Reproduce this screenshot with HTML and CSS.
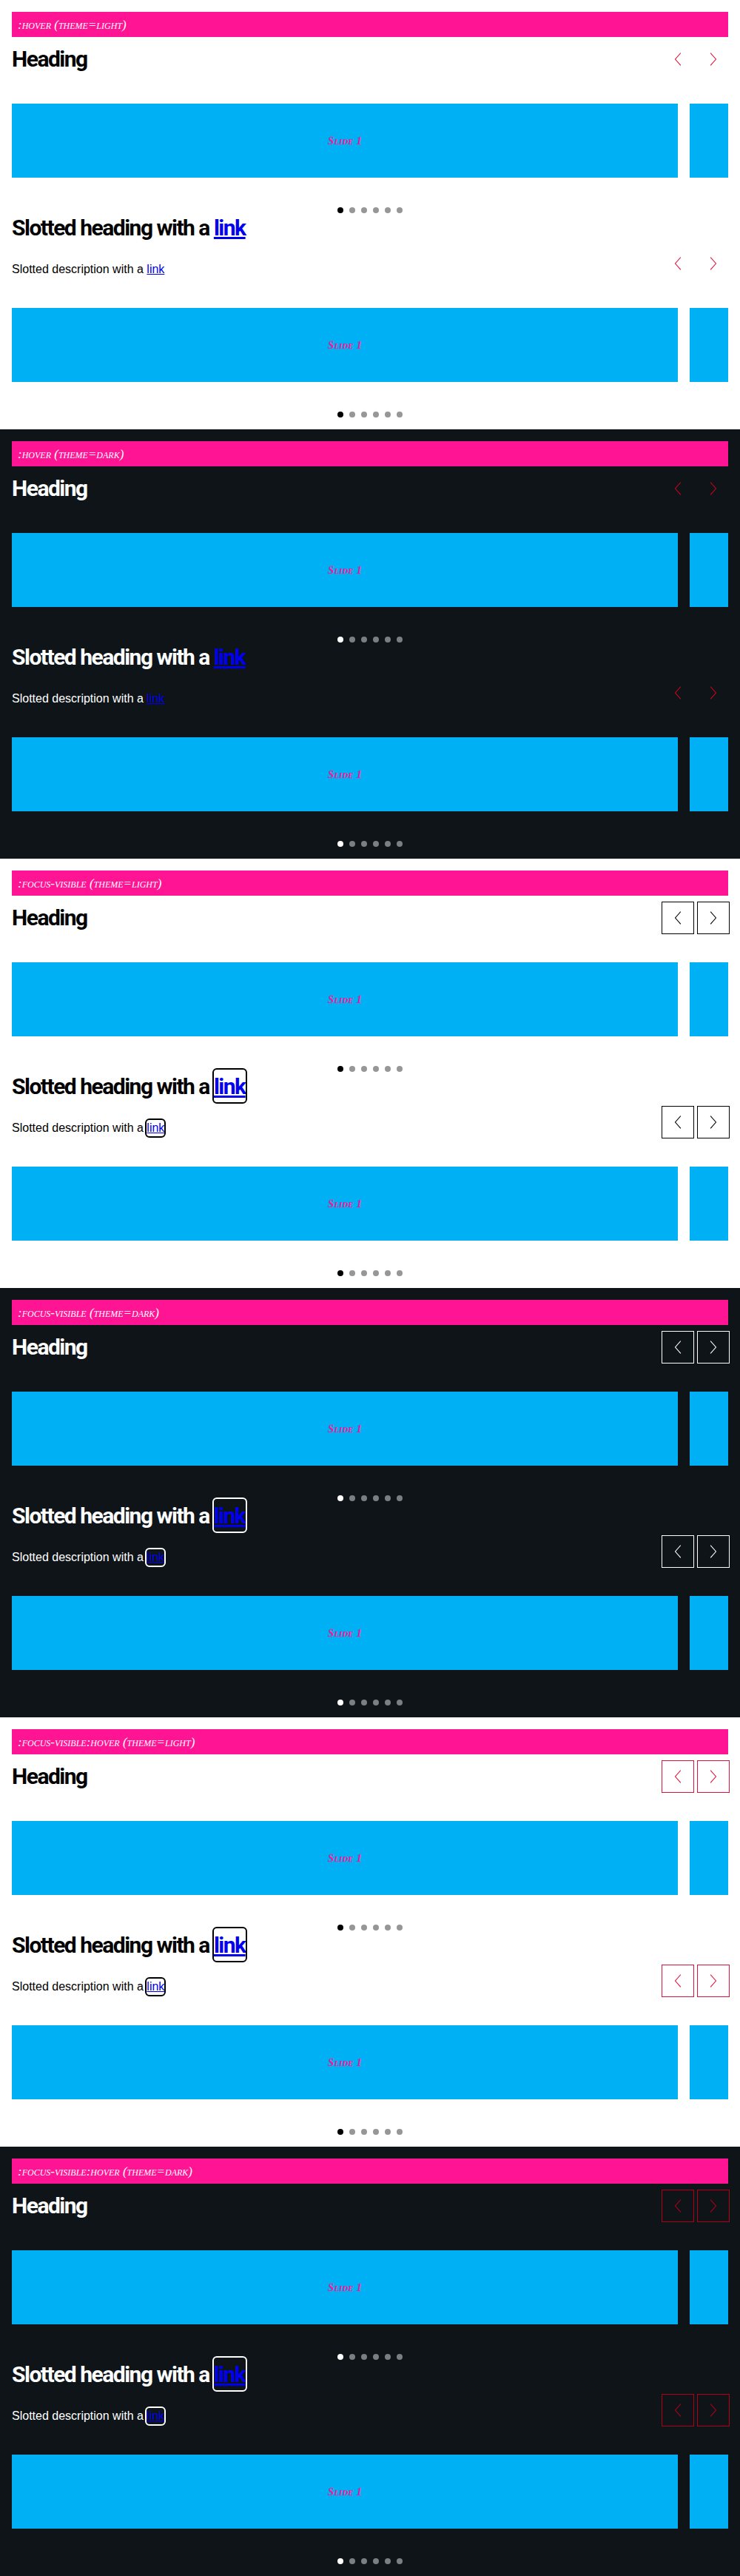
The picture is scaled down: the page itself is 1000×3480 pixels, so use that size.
FILE: index.html
```html
<!DOCTYPE html>
<html lang="en">
<head>
<meta charset="utf-8">
<title>Carousel states</title>
<link rel="stylesheet" href="styles.css">
</head>
<body>

<section class="state light hover">
  <div class="label">:hover (theme=light)</div>
  <div class="carousel">
    <div class="c-head">
      <div class="c-text"><h2 class="c-heading">Heading</h2></div>
      <div class="c-nav">
        <button class="nav-btn" type="button"><svg viewBox="0 0 24 24" width="24" height="24"><path d="M15.5 4 L8.5 12 L15.5 20"/></svg></button>
        <button class="nav-btn" type="button"><svg viewBox="0 0 24 24" width="24" height="24"><path d="M8.5 4 L15.5 12 L8.5 20"/></svg></button>
      </div>
    </div>
    <div class="track"><div class="slide">Slide 1</div><div class="slide"></div></div>
    <div class="dots"><span class="dot on"></span><span class="dot"></span><span class="dot"></span><span class="dot"></span><span class="dot"></span><span class="dot"></span></div>
  </div>
  <div class="carousel">
    <div class="c-head">
      <div class="c-text">
        <h2 class="c-heading">Slotted heading with a <a href="#" class="h-link">link</a></h2>
        <p class="c-desc">Slotted description with a <a href="#" class="d-link">link</a></p>
      </div>
      <div class="c-nav">
        <button class="nav-btn" type="button"><svg viewBox="0 0 24 24" width="24" height="24"><path d="M15.5 4 L8.5 12 L15.5 20"/></svg></button>
        <button class="nav-btn" type="button"><svg viewBox="0 0 24 24" width="24" height="24"><path d="M8.5 4 L15.5 12 L8.5 20"/></svg></button>
      </div>
    </div>
    <div class="track"><div class="slide">Slide 1</div><div class="slide"></div></div>
    <div class="dots"><span class="dot on"></span><span class="dot"></span><span class="dot"></span><span class="dot"></span><span class="dot"></span><span class="dot"></span></div>
  </div>
</section>

<section class="state dark hover">
  <div class="label">:hover (theme=dark)</div>
  <div class="carousel">
    <div class="c-head">
      <div class="c-text"><h2 class="c-heading">Heading</h2></div>
      <div class="c-nav">
        <button class="nav-btn" type="button"><svg viewBox="0 0 24 24" width="24" height="24"><path d="M15.5 4 L8.5 12 L15.5 20"/></svg></button>
        <button class="nav-btn" type="button"><svg viewBox="0 0 24 24" width="24" height="24"><path d="M8.5 4 L15.5 12 L8.5 20"/></svg></button>
      </div>
    </div>
    <div class="track"><div class="slide">Slide 1</div><div class="slide"></div></div>
    <div class="dots"><span class="dot on"></span><span class="dot"></span><span class="dot"></span><span class="dot"></span><span class="dot"></span><span class="dot"></span></div>
  </div>
  <div class="carousel">
    <div class="c-head">
      <div class="c-text">
        <h2 class="c-heading">Slotted heading with a <a href="#" class="h-link">link</a></h2>
        <p class="c-desc">Slotted description with a <a href="#" class="d-link">link</a></p>
      </div>
      <div class="c-nav">
        <button class="nav-btn" type="button"><svg viewBox="0 0 24 24" width="24" height="24"><path d="M15.5 4 L8.5 12 L15.5 20"/></svg></button>
        <button class="nav-btn" type="button"><svg viewBox="0 0 24 24" width="24" height="24"><path d="M8.5 4 L15.5 12 L8.5 20"/></svg></button>
      </div>
    </div>
    <div class="track"><div class="slide">Slide 1</div><div class="slide"></div></div>
    <div class="dots"><span class="dot on"></span><span class="dot"></span><span class="dot"></span><span class="dot"></span><span class="dot"></span><span class="dot"></span></div>
  </div>
</section>

<section class="state light focus">
  <div class="label">:focus-visible (theme=light)</div>
  <div class="carousel">
    <div class="c-head">
      <div class="c-text"><h2 class="c-heading">Heading</h2></div>
      <div class="c-nav">
        <button class="nav-btn" type="button"><svg viewBox="0 0 24 24" width="24" height="24"><path d="M15.5 4 L8.5 12 L15.5 20"/></svg></button>
        <button class="nav-btn" type="button"><svg viewBox="0 0 24 24" width="24" height="24"><path d="M8.5 4 L15.5 12 L8.5 20"/></svg></button>
      </div>
    </div>
    <div class="track"><div class="slide">Slide 1</div><div class="slide"></div></div>
    <div class="dots"><span class="dot on"></span><span class="dot"></span><span class="dot"></span><span class="dot"></span><span class="dot"></span><span class="dot"></span></div>
  </div>
  <div class="carousel">
    <div class="c-head">
      <div class="c-text">
        <h2 class="c-heading">Slotted heading with a <a href="#" class="h-link">link</a></h2>
        <p class="c-desc">Slotted description with a <a href="#" class="d-link">link</a></p>
      </div>
      <div class="c-nav">
        <button class="nav-btn" type="button"><svg viewBox="0 0 24 24" width="24" height="24"><path d="M15.5 4 L8.5 12 L15.5 20"/></svg></button>
        <button class="nav-btn" type="button"><svg viewBox="0 0 24 24" width="24" height="24"><path d="M8.5 4 L15.5 12 L8.5 20"/></svg></button>
      </div>
    </div>
    <div class="track"><div class="slide">Slide 1</div><div class="slide"></div></div>
    <div class="dots"><span class="dot on"></span><span class="dot"></span><span class="dot"></span><span class="dot"></span><span class="dot"></span><span class="dot"></span></div>
  </div>
</section>

<section class="state dark focus">
  <div class="label">:focus-visible (theme=dark)</div>
  <div class="carousel">
    <div class="c-head">
      <div class="c-text"><h2 class="c-heading">Heading</h2></div>
      <div class="c-nav">
        <button class="nav-btn" type="button"><svg viewBox="0 0 24 24" width="24" height="24"><path d="M15.5 4 L8.5 12 L15.5 20"/></svg></button>
        <button class="nav-btn" type="button"><svg viewBox="0 0 24 24" width="24" height="24"><path d="M8.5 4 L15.5 12 L8.5 20"/></svg></button>
      </div>
    </div>
    <div class="track"><div class="slide">Slide 1</div><div class="slide"></div></div>
    <div class="dots"><span class="dot on"></span><span class="dot"></span><span class="dot"></span><span class="dot"></span><span class="dot"></span><span class="dot"></span></div>
  </div>
  <div class="carousel">
    <div class="c-head">
      <div class="c-text">
        <h2 class="c-heading">Slotted heading with a <a href="#" class="h-link">link</a></h2>
        <p class="c-desc">Slotted description with a <a href="#" class="d-link">link</a></p>
      </div>
      <div class="c-nav">
        <button class="nav-btn" type="button"><svg viewBox="0 0 24 24" width="24" height="24"><path d="M15.5 4 L8.5 12 L15.5 20"/></svg></button>
        <button class="nav-btn" type="button"><svg viewBox="0 0 24 24" width="24" height="24"><path d="M8.5 4 L15.5 12 L8.5 20"/></svg></button>
      </div>
    </div>
    <div class="track"><div class="slide">Slide 1</div><div class="slide"></div></div>
    <div class="dots"><span class="dot on"></span><span class="dot"></span><span class="dot"></span><span class="dot"></span><span class="dot"></span><span class="dot"></span></div>
  </div>
</section>

<section class="state light focus hover">
  <div class="label">:focus-visible:hover (theme=light)</div>
  <div class="carousel">
    <div class="c-head">
      <div class="c-text"><h2 class="c-heading">Heading</h2></div>
      <div class="c-nav">
        <button class="nav-btn" type="button"><svg viewBox="0 0 24 24" width="24" height="24"><path d="M15.5 4 L8.5 12 L15.5 20"/></svg></button>
        <button class="nav-btn" type="button"><svg viewBox="0 0 24 24" width="24" height="24"><path d="M8.5 4 L15.5 12 L8.5 20"/></svg></button>
      </div>
    </div>
    <div class="track"><div class="slide">Slide 1</div><div class="slide"></div></div>
    <div class="dots"><span class="dot on"></span><span class="dot"></span><span class="dot"></span><span class="dot"></span><span class="dot"></span><span class="dot"></span></div>
  </div>
  <div class="carousel">
    <div class="c-head">
      <div class="c-text">
        <h2 class="c-heading">Slotted heading with a <a href="#" class="h-link">link</a></h2>
        <p class="c-desc">Slotted description with a <a href="#" class="d-link">link</a></p>
      </div>
      <div class="c-nav">
        <button class="nav-btn" type="button"><svg viewBox="0 0 24 24" width="24" height="24"><path d="M15.5 4 L8.5 12 L15.5 20"/></svg></button>
        <button class="nav-btn" type="button"><svg viewBox="0 0 24 24" width="24" height="24"><path d="M8.5 4 L15.5 12 L8.5 20"/></svg></button>
      </div>
    </div>
    <div class="track"><div class="slide">Slide 1</div><div class="slide"></div></div>
    <div class="dots"><span class="dot on"></span><span class="dot"></span><span class="dot"></span><span class="dot"></span><span class="dot"></span><span class="dot"></span></div>
  </div>
</section>

<section class="state dark focus hover">
  <div class="label">:focus-visible:hover (theme=dark)</div>
  <div class="carousel">
    <div class="c-head">
      <div class="c-text"><h2 class="c-heading">Heading</h2></div>
      <div class="c-nav">
        <button class="nav-btn" type="button"><svg viewBox="0 0 24 24" width="24" height="24"><path d="M15.5 4 L8.5 12 L15.5 20"/></svg></button>
        <button class="nav-btn" type="button"><svg viewBox="0 0 24 24" width="24" height="24"><path d="M8.5 4 L15.5 12 L8.5 20"/></svg></button>
      </div>
    </div>
    <div class="track"><div class="slide">Slide 1</div><div class="slide"></div></div>
    <div class="dots"><span class="dot on"></span><span class="dot"></span><span class="dot"></span><span class="dot"></span><span class="dot"></span><span class="dot"></span></div>
  </div>
  <div class="carousel">
    <div class="c-head">
      <div class="c-text">
        <h2 class="c-heading">Slotted heading with a <a href="#" class="h-link">link</a></h2>
        <p class="c-desc">Slotted description with a <a href="#" class="d-link">link</a></p>
      </div>
      <div class="c-nav">
        <button class="nav-btn" type="button"><svg viewBox="0 0 24 24" width="24" height="24"><path d="M15.5 4 L8.5 12 L15.5 20"/></svg></button>
        <button class="nav-btn" type="button"><svg viewBox="0 0 24 24" width="24" height="24"><path d="M8.5 4 L15.5 12 L8.5 20"/></svg></button>
      </div>
    </div>
    <div class="track"><div class="slide">Slide 1</div><div class="slide"></div></div>
    <div class="dots"><span class="dot on"></span><span class="dot"></span><span class="dot"></span><span class="dot"></span><span class="dot"></span><span class="dot"></span></div>
  </div>
</section>

</body>
</html>
```

FILE: styles.css
```css
html, body {
  margin: 0;
  padding: 0;
}

body {
  width: 1000px;
  font-family: "Liberation Sans", Arial, sans-serif;
}

.state {
  box-sizing: border-box;
  height: 580px;
  padding: 16px;
  overflow: hidden;
}

.state.light {
  background: #ffffff;
  color: #000000;
}

.state.dark {
  background: #0e1418;
  color: #ffffff;
}

.label {
  height: 34px;
  margin-bottom: 10px;
  display: flex;
  align-items: center;
  padding: 0 8px;
  background: #ff1493;
  color: #ffffff;
  font-family: "Liberation Serif", "Times New Roman", serif;
  font-style: italic;
  font-variant: small-caps;
  font-size: 17px;
  line-height: 1;
}

.c-head {
  display: flex;
  justify-content: space-between;
  align-items: flex-end;
}

.c-heading {
  margin: 0;
  font-family: "Roboto", "Liberation Sans", sans-serif;
  font-weight: 700;
  font-size: 30px;
  line-height: 40px;
  letter-spacing: -1.5px;
}

.c-desc {
  margin: 24px 0 0;
  font-family: "Liberation Sans", Arial, sans-serif;
  font-size: 16px;
  line-height: 24px;
}

.c-heading a,
.c-desc a {
  color: #0000ee;
  text-decoration: underline;
}

.c-nav {
  display: flex;
  gap: 8px;
}

.nav-btn {
  width: 40px;
  height: 40px;
  padding: 0;
  margin: 0;
  border: 0;
  background: transparent;
  display: flex;
  align-items: center;
  justify-content: center;
  cursor: pointer;
}

.nav-btn svg {
  display: block;
  width: 24px;
  height: 24px;
  fill: none;
  stroke-width: 1.1;
  stroke-linecap: square;
}

.light .nav-btn svg { stroke: #000000; }
.dark .nav-btn svg { stroke: #ffffff; }

/* hover */
.light.hover .nav-btn svg { stroke: #dc143c; }
.dark.hover .nav-btn svg { stroke: #d0021b; }

/* focus-visible */
.light.focus .nav-btn { outline: 1px solid #000000; outline-offset: 1px; }
.dark.focus .nav-btn { outline: 1px solid #ffffff; outline-offset: 1px; }
.light.focus.hover .nav-btn { outline-color: #dc143c; }
.dark.focus.hover .nav-btn { outline-color: #b00018; }
.dark.focus.hover .nav-btn svg { stroke: #b00018; }

.focus .h-link,
.focus .d-link {
  outline: 2px solid #000000;
  border-radius: 4px;
}

.dark.focus .h-link,
.dark.focus .d-link {
  outline-color: #ffffff;
}

.focus .h-link { padding: 5px 0 4px; }
.focus .d-link { padding: 2px 0 3px; }

.track {
  margin-top: 40px;
  display: flex;
  gap: 16px;
  overflow: hidden;
}

.slide {
  flex: 0 0 900px;
  height: 100px;
  background: #00b0f4;
  display: flex;
  align-items: center;
  justify-content: center;
  color: #ff1493;
  font-family: "Liberation Serif", "Times New Roman", serif;
  font-style: italic;
  font-weight: 700;
  font-variant: small-caps;
  font-size: 15px;
}

.dots {
  margin-top: 40px;
  height: 8px;
  display: flex;
  justify-content: center;
  gap: 8px;
}

.dot {
  width: 8px;
  height: 8px;
  border-radius: 50%;
}

.light .dot { background: #979797; }
.light .dot.on { background: #000000; }
.dark .dot { background: #7c7f81; }
.dark .dot.on { background: #ffffff; }
```
